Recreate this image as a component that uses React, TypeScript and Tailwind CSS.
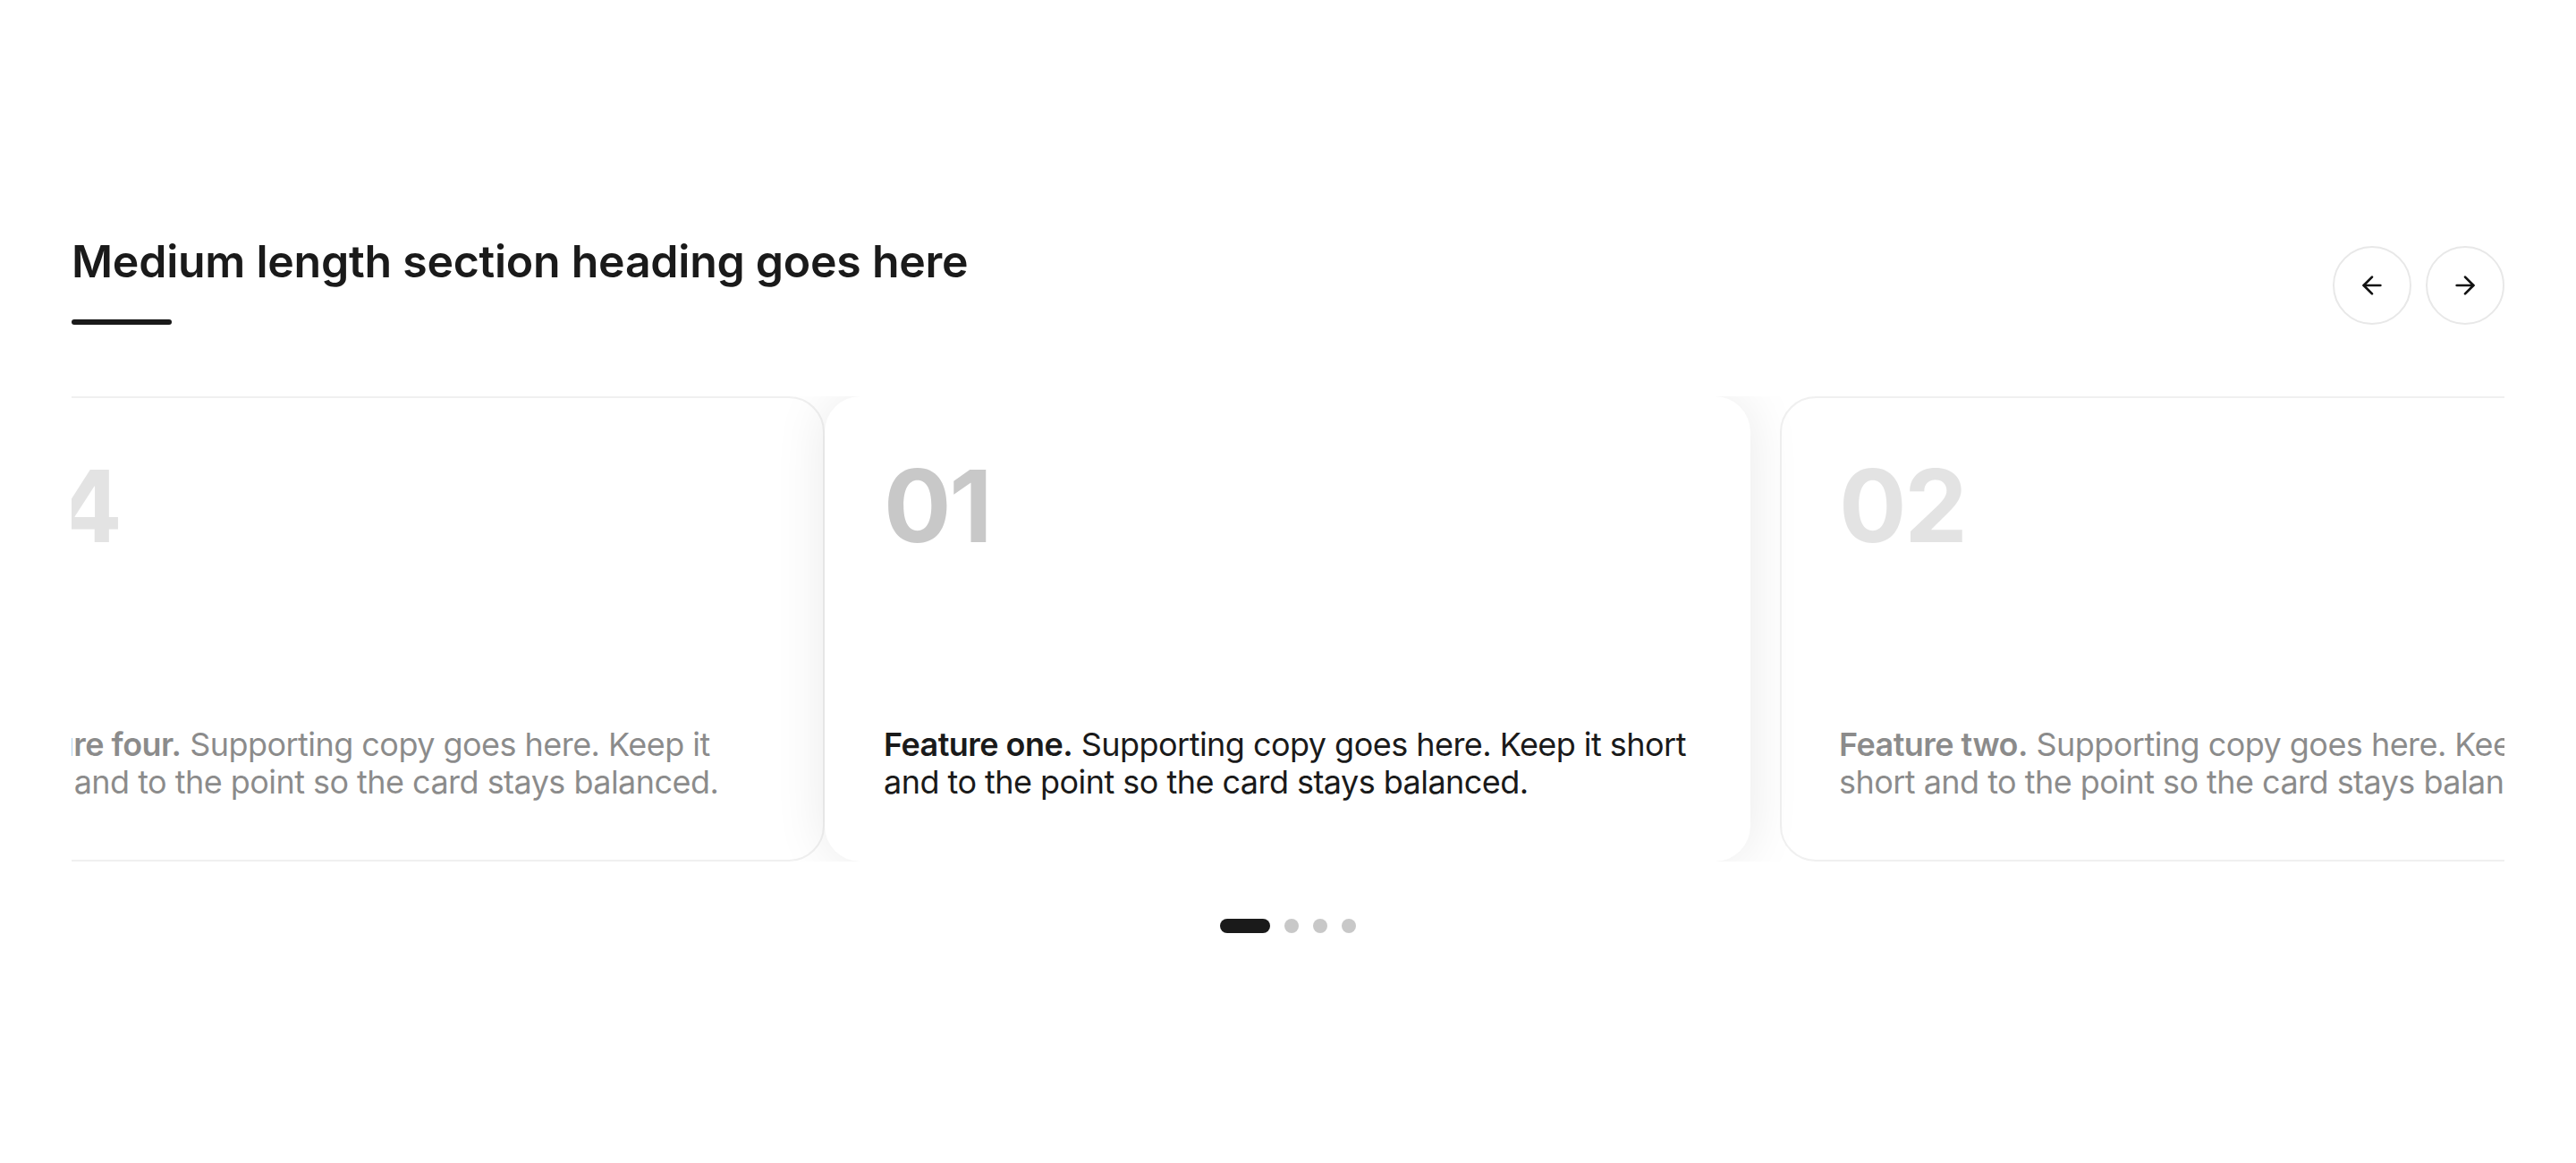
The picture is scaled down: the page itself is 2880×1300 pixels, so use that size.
import { ArrowLeft, ArrowRight } from 'lucide-react';

type Slide = {
  num: string;
  title: string;
  body: string;
};

const slides: Slide[] = [
  { num: '04', title: 'Feature four.', body: 'Supporting copy goes here. Keep it short and to the point so the card stays balanced.' },
  { num: '01', title: 'Feature one.', body: 'Supporting copy goes here. Keep it short and to the point so the card stays balanced.' },
  { num: '02', title: 'Feature two.', body: 'Supporting copy goes here. Keep it short and to the point so the card stays balanced.' },
  { num: '03', title: 'Feature three.', body: 'Supporting copy goes here. Keep it short and to the point so the card stays balanced.' },
];

const Card = ({ slide, isActive, className }: { slide: Slide; isActive: boolean; className: string }) => (
  <div
    className={
      'flex h-full shrink-0 flex-col justify-between rounded-[40px] border-2 bg-white px-16 pt-16 pb-[66px] ' +
      (isActive
        ? 'relative z-10 border-transparent shadow-[0_0_60px_rgba(0,0,0,0.09)] '
        : 'border-[#e2e2e2] opacity-50 ') +
      className
    }
  >
    <div className="text-[112px] font-bold leading-none tracking-[-0.02em] text-[#c8c8c8]">{slide.num}</div>
    <p className="text-[36px] leading-[42px] tracking-[-0.015em] text-[#1a1a1a]">
      <span className="font-semibold">{slide.title}</span> {slide.body}
    </p>
  </div>
);

export default function App() {
  return (
    <div className="min-h-screen bg-white font-['Inter',sans-serif] text-[#1a1a1a]">
      <section className="px-20 pt-[262px]">
        <div className="flex items-end justify-between">
          <div>
            <h2 className="text-[50px] font-semibold leading-[60px] tracking-[-0.005em]">
              Medium length section heading goes here
            </h2>
            <div className="mt-[35px] h-1.5 w-28 rounded-full bg-[#1a1a1a]" />
          </div>
          <div className="flex gap-4">
            <button className="flex h-[88px] w-[88px] items-center justify-center rounded-full border-2 border-[#e8e8e8] bg-white text-[#111]">
              <ArrowLeft size={32} strokeWidth={2} />
            </button>
            <button className="flex h-[88px] w-[88px] items-center justify-center rounded-full border-2 border-[#e8e8e8] bg-white text-[#111]">
              <ArrowRight size={32} strokeWidth={2} />
            </button>
          </div>
        </div>

        <div className="mt-20 h-[520px] overflow-hidden">
          <div className="-ml-[158px] flex h-full">
            <Card slide={slides[0]} isActive={false} className="w-[1000px]" />
            <Card slide={slides[1]} isActive={true} className="w-[1035px]" />
            <Card slide={slides[2]} isActive={false} className="ml-[33px] w-[1000px]" />
            <Card slide={slides[3]} isActive={false} className="ml-[33px] w-[1000px]" />
          </div>
        </div>

        <div className="mt-16 flex items-center justify-center gap-4">
          {slides.map((s, i) => (
            <span
              key={s.num}
              className={i === 0 ? 'h-4 w-14 rounded-full bg-[#1a1a1a]' : 'h-4 w-4 rounded-full bg-[#c8c8c8]'}
            />
          ))}
        </div>
      </section>
    </div>
  );
}
